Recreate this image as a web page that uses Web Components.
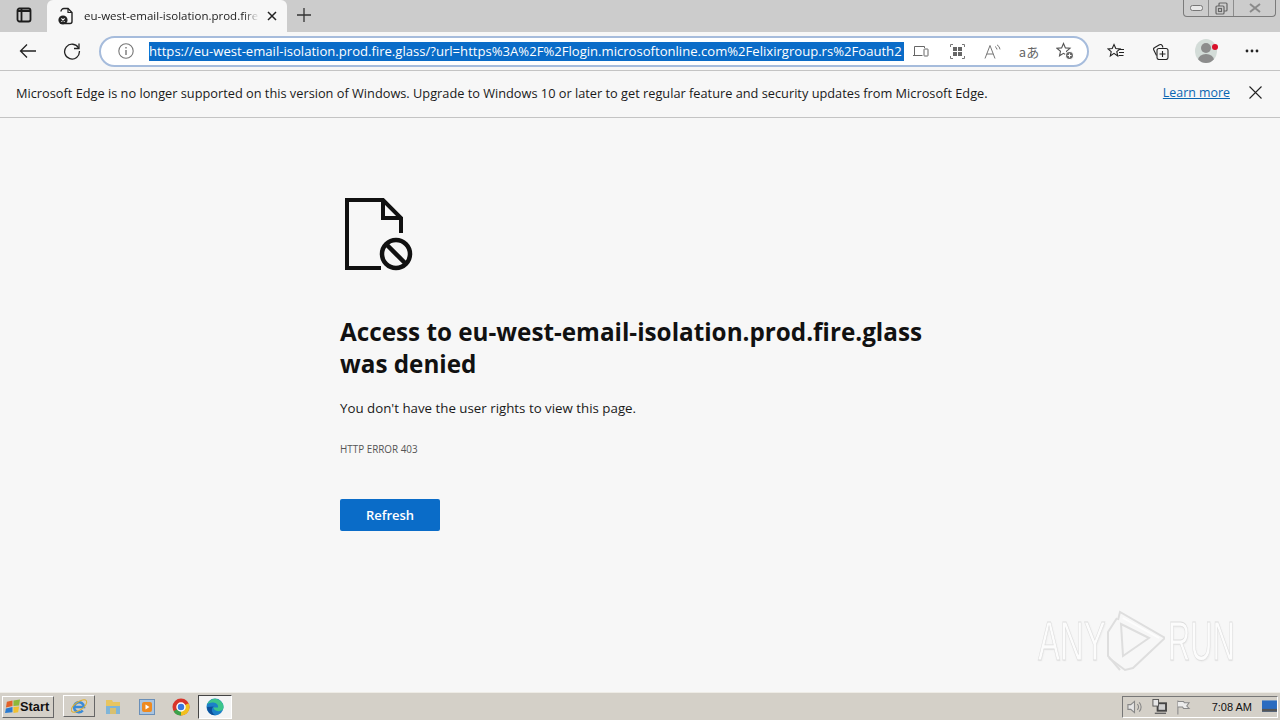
<!DOCTYPE html>
<html lang="en">
<head>
<meta charset="utf-8">
<title>Access denied</title>
<style>
html, body { margin: 0; padding: 0; height: 100%; }
body { width: 1280px; height: 720px; overflow: hidden; display: flex; flex-direction: column; background: #f7f7f7; font-family: "Open Sans", "Liberation Sans", sans-serif; }
</style>
</head>
<body>
<edge-tabstrip></edge-tabstrip>
<edge-toolbar></edge-toolbar>
<edge-infobar></edge-infobar>
<error-page></error-page>
<win-taskbar></win-taskbar>
<any-run-mark></any-run-mark>

<script>
function define(name, html) {
    customElements.define(name, class extends HTMLElement {
        constructor() {
            super();
            this.attachShadow({ mode: 'open' }).innerHTML = html;
        }
    });
}

define('edge-tabstrip', `
<style>
:host { display: flex; height: 32px; background: #cccccc; flex: none; position: relative; color: #1a1a1a; }
.side { width: 47px; display: flex; align-items: center; justify-content: center; padding-bottom: 2px; box-sizing: border-box; }
.tab { width: 240px; background: #f7f7f7; border-radius: 6px 6px 0 0; display: flex; align-items: center; padding: 0 0 0 11px; box-sizing: border-box; }
.title { font: 11.5px "Open Sans", sans-serif; color: #222; margin: 0 0 2px 10px; width: 176px; white-space: nowrap; -webkit-mask-image: linear-gradient(to right, #000 160px, transparent 175px); }
.close { margin-left: 7px; display: flex; }
.plus { margin-left: 9px; display: flex; align-items: center; padding-bottom: 2px; }
.caption { position: absolute; right: 4px; top: 0; width: 93px; height: 17px; border: 1px solid #7b7b7b; border-top: 0; border-radius: 0 0 4px 4px; display: grid; grid-template-columns: 25px 25px 1fr; box-sizing: border-box; }
.caption span { display: flex; align-items: center; justify-content: center; border-right: 1px solid #8d8d8d; }
.caption span:last-child { border-right: 0; }
</style>
<div class="side">
  <svg width="16" height="16" viewBox="0 0 16 16" fill="none" stroke="#1c1c1c" stroke-width="1.800"><rect x="1.500" y="1.500" width="13" height="13" rx="2"/><path d="M5.500 2v12M2 4h12" /></svg>
</div>
<div class="tab">
  <svg width="16" height="18" viewBox="0 0 16 18" fill="none"><path d="M3 4.500a3 3 0 0 1 3-3h4l4 4v9a2 2 0 0 1-2 2H7" stroke="#222" stroke-width="1.400"/><path d="M10 1.500v4h4" stroke="#222" stroke-width="1.200"/><circle cx="5" cy="13" r="4.600" fill="#222"/><path d="M3.400 11.400l3.200 3.200M6.600 11.400l-3.200 3.200" stroke="#fff" stroke-width="1.100"/></svg>
  <span class="title">eu-west-email-isolation.prod.fire</span>
  <span class="close"><svg width="10" height="10" viewBox="0 0 10 10" stroke="#222" stroke-width="1.500"><path d="M1 1l8 8M9 1l-8 8"/></svg></span>
</div>
<div class="plus"><svg width="16" height="16" viewBox="0 0 16 16" stroke="#333" stroke-width="1.300"><path d="M8 1v14M1 8h14"/></svg></div>
<div class="caption">
  <span><svg width="13" height="7" viewBox="0 0 13 7" fill="#e8e8e8" stroke="#777"><rect x=".5" y=".5" width="12" height="5" rx="2"/></svg></span>
  <span><svg width="13" height="13" viewBox="0 0 13 13" fill="none" stroke="#666" stroke-width="1.200"><rect x="4" y="1" width="8" height="8" rx="1"/><rect x="1" y="4" width="8" height="8" rx="1" fill="#cccccc"/><rect x="3.500" y="6.500" width="3" height="3"/></svg></span>
  <span><svg width="14" height="10" viewBox="0 0 14 10" fill="none" stroke="#8a8a8a" stroke-width="2"><path d="M2 1l10 8M12 1L2 9"/></svg></span>
</div>
`);

define('edge-toolbar', `
<style>
:host { display: flex; align-items: center; height: 39px; flex: none; background: #f7f7f7; border-bottom: 1px solid #c4c4c4; box-sizing: border-box; }
.nav { width: 44px; display: flex; justify-content: center; }
.nav.first { margin-left: 6px; }
.omnibox { width: 990px; height: 31px; margin-left: 5px; box-sizing: border-box; border: 2px solid #a6bcdc; border-radius: 16px; background: #fff; display: flex; align-items: center; padding-left: 17px; }
.url { margin-left: 15px; width: 755px; height: 19px; flex: none; background: #0a6cc8; color: #fff; font: 13.1px/19px "Open Sans", sans-serif; white-space: nowrap; }
.inner { display: flex; align-items: center; margin-left: -1px; }
.inner svg { display: block; }
.inner span { width: 36px; display: flex; justify-content: center; }
.tools { display: flex; align-items: center; margin-left: 5px; }
.tools > span { width: 44px; display: flex; justify-content: center; }
.tools > span.me { width: 48px; }
.avatar { position: relative; width: 22px; height: 24px; }
.face { display: block; width: 22px; height: 24px; border-radius: 50%; background: #d3dcd8; overflow: hidden; }
.dot { position: absolute; left: 17px; top: 5px; width: 6px; height: 6px; background: #d9102a; border-radius: 50%; }
</style>
<span class="nav first"><svg width="18" height="16" viewBox="0 0 18 16" fill="none" stroke="#222" stroke-width="1.300"><path d="M17 8H1.500M8 1.500L1.500 8 8 14.500"/></svg></span>
<span class="nav"><svg width="18" height="18" viewBox="0 0 18 18" fill="none" stroke="#222" stroke-width="1.300"><path d="M15.600 6.200A7.400 7.400 0 1 0 16.400 9"/><path d="M16 1.500v5h-5"/></svg></span>
<div class="omnibox">
  <svg width="16" height="16" viewBox="0 0 16 16" fill="none" stroke="#777" stroke-width="1.100"><circle cx="8" cy="8" r="7.200"/><path d="M8 7v5M8 4v1.600" stroke-width="1.400"/></svg>
  <div class="url">https://eu-west-email-isolation.prod.fire.glass/?url=https%3A%2F%2Flogin.microsoftonline.com%2Felixirgroup.rs%2Foauth2</div>
  <div class="inner">
    <span><svg width="16" height="12" viewBox="0 0 16 12" fill="none" stroke="#666"><path d="M1.500 10V1.500h10V3"/><path d="M0 10.500h9.500"/><rect x="11" y="4" width="4" height="7" rx=".5"/></svg></span>
    <span><svg width="15" height="15" viewBox="0 0 15 15" fill="none" stroke="#777"><path d="M.5 3V.5H3M12 .5h2.500V3M.5 12v2.500H3M12 14.500h2.500V12"/><g fill="#666" stroke="none"><rect x="3" y="3" width="4" height="4"/><rect x="8" y="3" width="4" height="4"/><rect x="3" y="8" width="4" height="4"/><rect x="8" y="8" width="4" height="4"/></g></svg></span>
    <span><svg width="18" height="15" viewBox="0 0 18 15" fill="none" stroke="#777"><path d="M1 14.500L6 1.500l5 13M2.800 10h6.400"/><path d="M11 2.500a4 4 0 0 1 2 3M13 .8a6 6 0 0 1 3 4.600"/></svg></span>
    <span style="font: 13px 'Noto Sans CJK JP', sans-serif; color: #666; line-height: 15px;">aあ</span>
    <span><svg width="18" height="18" viewBox="0 0 18 18" fill="none" stroke="#555" stroke-width="1.100"><path d="M7.500 1.500l1.900 4.400 4.600.4-3.500 3 1 4.500-4-2.400-4 2.400 1-4.500L1 6.300l4.600-.4z"/><circle cx="13.500" cy="13.500" r="4" fill="#666" stroke="#fff"/><path d="M13.500 11.500v4M11.500 13.500h4" stroke="#fff"/></svg></span>
  </div>
</div>
<div class="tools">
  <span><svg width="18" height="16" viewBox="0 0 18 16" fill="none" stroke="#222" stroke-width="1.100"><path d="M7 1.500l1.800 4 4.200.4-3.200 2.800.9 4.300L7 10.400l-3.700 2.600.9-4.300L1 5.900l4.200-.4z"/><path d="M12 6.500h5M12 9.500h5M11.500 12.500h5"/></svg></span>
  <span><svg width="17" height="17" viewBox="0 0 17 17" fill="none" stroke="#222" stroke-width="1.100"><path d="M4.500 12.500L1.800 7A2 2 0 0 1 2.800 4.400L7.500 1.800a2 2 0 0 1 2.700.8l.8 1.900"/><rect x="5" y="5.500" width="11" height="11" rx="2"/><path d="M10.500 8v6M7.500 11h6"/></svg></span>
  <span class="me"><span class="avatar"><span class="face"><svg width="22" height="24" viewBox="0 0 22 24"><circle cx="11" cy="9" r="5" fill="#8c8c8c"/><ellipse cx="11" cy="21" rx="8" ry="6" fill="#8c8c8c"/></svg></span><i class="dot"></i></span></span>
  <span><svg width="14" height="4" viewBox="0 0 14 4" fill="#222"><circle cx="2" cy="2" r="1.400"/><circle cx="7" cy="2" r="1.400"/><circle cx="12" cy="2" r="1.400"/></svg></span>
</div>
`);

define('edge-infobar', `
<style>
:host { display: flex; align-items: center; height: 47px; flex: none; background: #f7f7f7; border-bottom: 1px solid #c4c4c4; box-sizing: border-box; padding: 0 18px 3px 16px; font: 12.77px "Open Sans", sans-serif; color: #1a1a1a; }
.msg { flex: 1; white-space: nowrap; }
a { color: #0a66b2; text-decoration: underline; font-size: 12.4px; margin-right: 19px; }
svg { display: block; }
</style>
<span class="msg">Microsoft Edge is no longer supported on this version of Windows. Upgrade to Windows 10 or later to get regular feature and security updates from Microsoft Edge.</span>
<a href="#">Learn more</a>
<svg width="13" height="13" viewBox="0 0 13 13" stroke="#222" stroke-width="1.100"><path d="M.5.5l12 12M12.500.5l-12 12"/></svg>
`);

define('error-page', `
<style>
:host { display: block; flex: 1; background: #f7f7f7; padding: 80px 0 0 340px; box-sizing: border-box; color: #111; }
svg { display: block; margin-left: 3px; }
h1 { margin: 44px 0 0; width: 600px; font: 700 24.25px/32px "Open Sans", sans-serif; color: #111; }
p { margin: 17px 0 0; font: 13.3px/22px "Open Sans", sans-serif; color: #1a1a1a; }
small { display: block; margin-top: 23px; font: 9.9px/14px "Open Sans", sans-serif; color: #555; }
button { display: block; margin-top: 43px; width: 100px; height: 32px; background: #0a6cc8; color: #fff; border: 0; border-radius: 2px; font: 600 13px "Open Sans", sans-serif; padding: 0; }
</style>
<svg width="70" height="74" viewBox="0 0 70 74" fill="none" stroke="#111" stroke-width="4"><path d="M38 70H4V2h36l18 18v15"/><path d="M40 2v18h18"/><circle cx="53" cy="56" r="14" stroke-width="4.500"/><path d="M43.500 46.500l19 19" stroke-width="4.500"/></svg>
<h1>Access to eu-west-email-isolation.prod.fire.glass was denied</h1>
<p>You don't have the user rights to view this page.</p>
<small>HTTP ERROR 403</small>
<button>Refresh</button>
`);

define('win-taskbar', `
<style>
:host { display: flex; align-items: center; height: 28px; flex: none; background: #d4d0c8; border-top: 1px solid #eeece6; box-sizing: border-box; font: 11px "Liberation Sans", sans-serif; color: #111; }
.start { margin-left: 2px; width: 52px; height: 22px; box-sizing: border-box; border: 1px solid; border-color: #fff #666 #666 #fff; display: flex; align-items: center; padding-left: 2px; font: 700 12.8px "Liberation Sans", sans-serif; white-space: nowrap; }
.app { width: 34px; height: 24px; display: flex; align-items: center; justify-content: center; box-sizing: border-box; }
.pressed { border: 1px solid; border-color: #fff #666 #666 #fff; width: 32px; height: 22px; margin: 0 1px; }
.active { background: #f4f4f4; border: 1px solid; border-color: #444 #fff #fff #444; }
.icons { display: flex; margin-left: 8px; }
.tray { margin-left: auto; margin-right: 2px; width: 156px; height: 22px; box-sizing: border-box; border: 1px solid; border-color: #777 #fff #fff #777; display: flex; align-items: center; padding-left: 4px; gap: 8px; }
.clock { margin-left: 13px; white-space: nowrap; }
</style>
<div class="start">
  <svg width="15" height="15" viewBox="0 0 16 16" style="flex:none"><path d="M2 3l6-1.500v6L1 9z" fill="#e2622a"/><path d="M9 1.500l7-1-1 6.500-6 .5z" fill="#8cb83a"/><path d="M1 10l7-1.500V14l-8 1z" fill="#2a7ad0"/><path d="M9 8.500l6-.5-1 6-5 1z" fill="#f0c030"/></svg>
  Start
</div>
<div class="icons">
  <div class="app pressed"><svg width="18" height="18" viewBox="0 0 18 18" fill="none"><path d="M4 10h10A5 5 0 1 0 12.800 13.500" stroke="#3a8bd8" stroke-width="2.500"/><ellipse cx="9" cy="9" rx="9" ry="4" transform="rotate(-35 9 9)" stroke="#e0b030"/></svg></div>
  <div class="app"><svg width="16" height="18" viewBox="0 0 16 18"><path d="M1 2h6l1 2h7v12H1z" fill="#e8c560"/><path d="M1 8h14v8H1z" fill="#7fb5d8"/><path d="M5 10h6v6H5z" fill="#d8c070"/></svg></div>
  <div class="app"><svg width="16" height="18" viewBox="0 0 16 18"><rect x=".5" y="1.500" width="15" height="15" fill="#a9c4e0" stroke="#6a8fb8"/><rect x="3" y="4" width="10" height="10" rx="2" fill="#ee8a20"/><path d="M6.500 6.500l4 2.500-4 2.500z" fill="#fff"/></svg></div>
  <div class="app"><svg width="18" height="18" viewBox="0 0 18 18"><circle cx="9" cy="9" r="8.500" fill="#d9352a"/><path d="M9 9L1.600 13.200A8.500 8.500 0 0 0 9 17.500z" fill="#3aa24a"/><path d="M9 9l7.600-3.800A8.500 8.500 0 0 1 9 17.500z" fill="#f2c01e"/><circle cx="9" cy="9" r="4" fill="#3a78e0" stroke="#fff" stroke-width="1.500"/></svg></div>
  <div class="app active"><svg width="18" height="18" viewBox="0 0 18 18"><circle cx="9" cy="9" r="8.500" fill="#1b80c8"/><path d="M17.500 10A8.500 8.500 0 0 0 1 6.500C4 3 13 4 12 9.500H7.500c0 3 5 5 9 2.500z" fill="#3cc58a"/><path d="M8 8.500c-3 1-3 6 1 8.500-4 .5-8-3-8-8z" fill="#0d4f9a"/></svg></div>
</div>
<div class="tray">
  <svg width="18" height="16" viewBox="0 0 18 16" fill="none" stroke="#888" stroke-width="1.200"><path d="M1 5.500h3L8 2v12l-4-3.500H1z" fill="#e6e6e6"/><path d="M11 5a4 4 0 0 1 0 6M13 3a7 7 0 0 1 0 10"/></svg>
  <svg width="17" height="16" viewBox="0 0 17 16"><rect x="5" y="3" width="11" height="10" fill="#444"/><rect x="7" y="5" width="7" height="6" fill="#cfcfcf"/><rect x="1" y="0" width="6" height="7" fill="#e6e6e6" stroke="#555"/><rect x="3" y="14" width="12" height="1.500" fill="#666"/></svg>
  <svg width="16" height="16" viewBox="0 0 16 16" fill="none" stroke="#888" stroke-width="1.100"><path d="M2 1v15"/><path d="M2 2h6l1 1.500h5l-2.500 3.500 2.500 2.500H8L7 8H2" fill="#ececec"/></svg>
  <span class="clock">7:08 AM</span>
  <svg style="margin-left:2px" width="16" height="14" viewBox="0 0 16 14"><rect width="16" height="12" fill="#2a6bc0"/><rect y="9" width="16" height="3" fill="#555"/></svg>
</div>
`);

define('any-run-mark', `
<style>
:host { position: absolute; left: 1038px; top: 610px; width: 194px; height: 62px; display: flex; align-items: center; font: 55px/62px "Liberation Sans", sans-serif; color: #fcfcfc; -webkit-text-stroke: .8px #dedede; text-shadow: 1px 1px 2px #e6e6e6; }
svg { flex: none; }
span { display: block; width: 67px; flex: none; white-space: nowrap; transform-origin: left center; transform: scaleX(.6); }
.run { width: 64px; margin-left: 3px; transform: scaleX(.56); }
</style>
<span>ANY</span>
<svg width="60" height="62" viewBox="0 0 60 62" fill="none" stroke="#dedede" stroke-width="2"><path d="M13 10L15 2l45 26-32 30-8 2-16-12"/><path d="M12 8L3 22v24l12 14"/><path d="M16 14l2 32 26-18z"/><path d="M18 8l36 20" stroke="#fdfdfd"/></svg>
<span class="run">RUN</span>
`);
</script>
</body>
</html>
